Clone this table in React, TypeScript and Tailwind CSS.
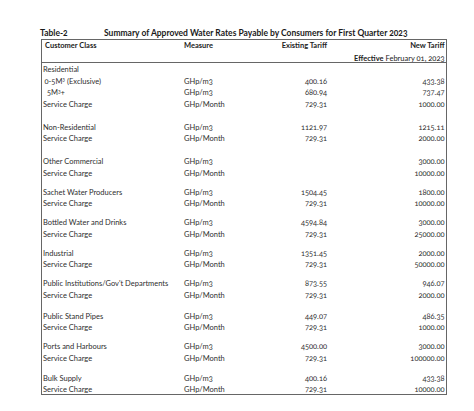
import React from "react";

type Row = {
  label: React.ReactNode;
  measure?: string;
  existing?: string;
  next?: string;
  indent?: string;
};

type Group = { gap: string; rows: Row[] };

const sc = (existing: string, next: string): Row => ({
  label: "Service Charge",
  measure: "GHp/Month",
  existing,
  next,
});

const Cube = () => <span className="relative -top-[2.5px] text-[5px]">3</span>;

const groups: Group[] = [
  {
    gap: "mt-0",
    rows: [
      { label: "Residential" },
      {
        label: (
          <>
            0-5M<Cube /> (Exclusive)
          </>
        ),
        measure: "GHp/m3",
        existing: "400.16",
        next: "433.38",
        indent: "pl-[2.5px]",
      },
      {
        label: (
          <>
            5M<Cube />+
          </>
        ),
        measure: "GHp/m3",
        existing: "680.94",
        next: "737.47",
        indent: "pl-[5px]",
      },
      sc("729.31", "1000.00"),
    ],
  },
  {
    gap: "mt-[11.5px]",
    rows: [
      { label: "Non-Residential", measure: "GHp/m3", existing: "1121.97", next: "1215.11" },
      sc("729.31", "2000.00"),
    ],
  },
  {
    gap: "mt-[11.5px]",
    rows: [
      { label: "Other Commercial", measure: "GHp/m3", next: "3000.00" },
      { label: "Service Charge", measure: "GHp/Month", next: "10000.00" },
    ],
  },
  {
    gap: "mt-[7.5px]",
    rows: [
      { label: "Sachet Water Producers", measure: "GHp/m3", existing: "1504.45", next: "1800.00" },
      sc("729.31", "10000.00"),
    ],
  },
  {
    gap: "mt-[7.5px]",
    rows: [
      { label: "Bottled Water and Drinks", measure: "GHp/m3", existing: "4594.84", next: "3000.00" },
      sc("729.31", "25000.00"),
    ],
  },
  {
    gap: "mt-[7.5px]",
    rows: [
      { label: "Industrial", measure: "GHp/m3", existing: "1351.45", next: "2000.00" },
      sc("729.31", "50000.00"),
    ],
  },
  {
    gap: "mt-[7.5px]",
    rows: [
      { label: "Public Institutions/Gov't Departments", measure: "GHp/m3", existing: "873.55", next: "946.07" },
      sc("729.31", "2000.00"),
    ],
  },
  {
    gap: "mt-[9.5px]",
    rows: [
      { label: "Public Stand Pipes", measure: "GHp/m3", existing: "449.07", next: "486.35" },
      sc("729.31", "1000.00"),
    ],
  },
  {
    gap: "mt-[7.5px]",
    rows: [
      { label: "Ports and Harbours", measure: "GHp/m3", existing: "4500.00", next: "3000.00" },
      sc("729.31", "100000.00"),
    ],
  },
  {
    gap: "mt-[8.5px]",
    rows: [
      { label: "Bulk Supply", measure: "GHp/m3", existing: "400.16", next: "433.38" },
      sc("729.31", "10000.00"),
    ],
  },
];

const cols = "grid grid-cols-[142px_76px_67px_119px]";

function TableRow({ row }: { row: Row }) {
  return (
    <div className={`${cols} h-[11.5px] items-center leading-none`}>
      <div className={`pl-[1px] whitespace-nowrap ${row.indent ?? ""}`}>{row.label}</div>
      <div>{row.measure}</div>
      <div className="text-right">{row.existing}</div>
      <div className="text-right pr-[1.5px]">{row.next}</div>
    </div>
  );
}

export default function App() {
  return (
    <div className="w-[474px] h-[411px] bg-white text-[#2e2e2e] font-['Lato',sans-serif] text-[7.5px] oldstyle-nums">
      <div className="pt-[28px] pl-[40px]">
        <div className="flex items-center h-[11px] font-bold text-[8.5px] text-[#1a1a1a]">
          <span className="w-[64px]">Table-2</span>
          <span>Summary of Approved Water Rates Payable by Consumers for First Quarter 2023</span>
        </div>
        <div className="ml-[1px] w-[406px] border border-[#666] h-[356px]">
          {/* header */}
          <div className="border-b border-[#666] h-[23px] font-bold text-[#222]">
            <div className={`${cols} h-[12px] items-center leading-none`}>
              <div className="pl-[3px]">Customer Class</div>
              <div>Measure</div>
              <div className="text-right">Existing Tariff</div>
              <div className="text-right pr-[1.5px]">New Tariff</div>
            </div>
            <div className="flex justify-end h-[10px] items-end leading-none pr-[1.5px]">
              Effective <span className="font-normal ml-[2px]">February 01, 2023</span>
            </div>
          </div>
          {/* body */}
          <div className="pt-[1.25px]">
            {groups.map((g, i) => (
              <div key={i} className={g.gap}>
                {g.rows.map((r, j) => (
                  <TableRow key={j} row={r} />
                ))}
              </div>
            ))}
          </div>
        </div>
      </div>
    </div>
  );
}
